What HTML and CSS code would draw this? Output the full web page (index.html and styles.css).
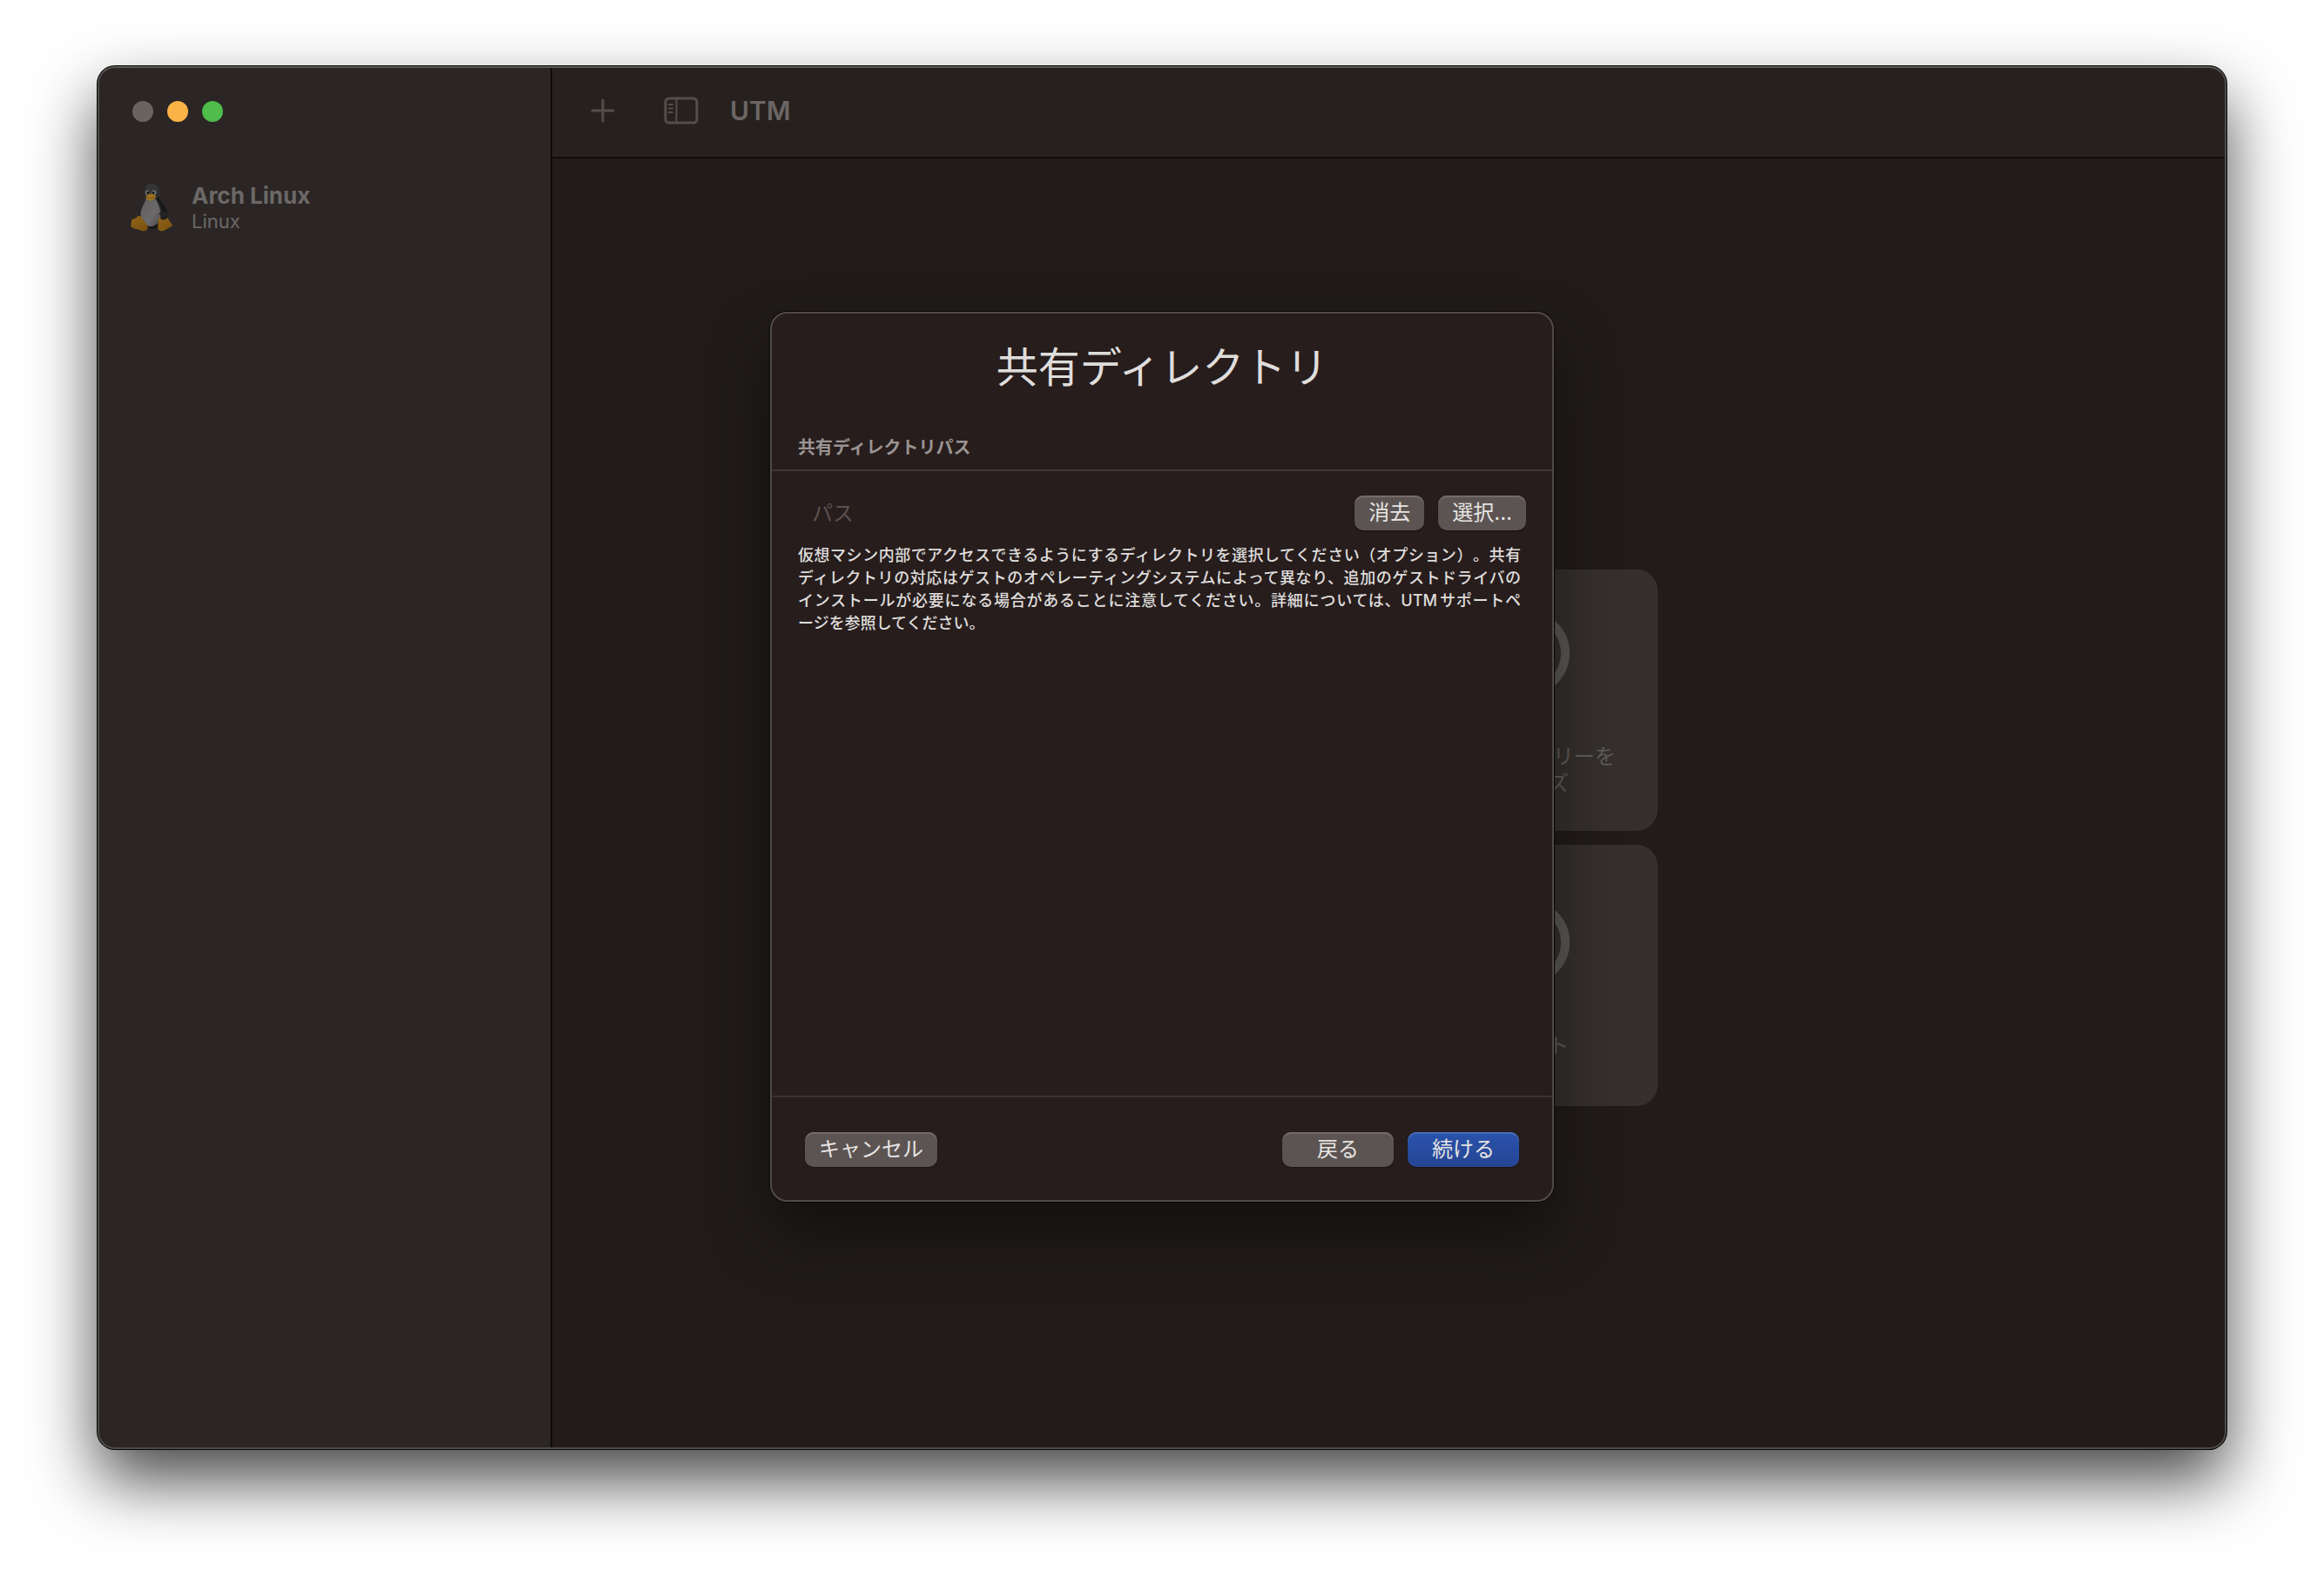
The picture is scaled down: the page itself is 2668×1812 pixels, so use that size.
FILE: index.html
```html
<!DOCTYPE html>
<html lang="ja">
<head>
<meta charset="utf-8">
<meta name="viewport" content="width=device-width, initial-scale=1">
<title>UTM</title>
<link rel="stylesheet" href="styles.css">
</head>
<body>
<div class="window">
  <aside class="sidebar">
    <div class="traffic">
      <button class="light light-close" type="button" aria-label="閉じる"></button>
      <button class="light light-min" type="button" aria-label="しまう"></button>
      <button class="light light-zoom" type="button" aria-label="拡大"></button>
    </div>
    <button class="machine" type="button">
      <svg class="tux" viewBox="28 30 146 168" aria-hidden="true">
        <defs>
          <linearGradient id="belly" x1="0" y1="0" x2="1" y2="1">
            <stop offset="0" stop-color="#5f5d5d"/><stop offset=".6" stop-color="#6b6969"/><stop offset="1" stop-color="#4b4949"/>
          </linearGradient>
          <linearGradient id="head" x1="0" y1="0" x2="0" y2="1">
            <stop offset="0" stop-color="#383737"/><stop offset="1" stop-color="#161515"/>
          </linearGradient>
          <linearGradient id="foot" x1="0" y1="0" x2="1" y2="1">
            <stop offset="0" stop-color="#8f6418"/><stop offset="1" stop-color="#78500f"/>
          </linearGradient>
        </defs>
        <path fill="url(#head)" d="M101 31C86 31 78 41 78 56C79 70 80 81 73 93C65 108 57 122 56 139C55 160 67 184 90 188C112 193 139 184 151 163C161 143 156 119 141 102C128 87 127 77 127 59C127 42 116 31 101 31Z"/>
        <path fill="url(#belly)" d="M82 82C79 98 66 113 63 132C60 156 73 180 96 181C118 181 131 164 133 144C135 124 126 107 118 91C113 81 91 79 82 82Z"/>
        <path fill="#191818" d="M118 82C127 101 141 116 139 145L151 158C162 133 150 109 137 97C130 90 126 83 125 76Z"/>
        <ellipse cx="86" cy="63" rx="7" ry="9" fill="#777575"/>
        <ellipse cx="109" cy="63" rx="8" ry="9" fill="#777575"/>
        <ellipse cx="88" cy="64" rx="4" ry="6" fill="#141313"/>
        <ellipse cx="107" cy="64" rx="4" ry="6" fill="#141313"/>
        <path fill="#9c711e" d="M80 77C87 70 94 66 99 67C106 67 112 73 118 76C114 84 105 91 96 91C88 90 82 84 80 77Z"/>
        <path fill="none" stroke="#694712" stroke-width="2" d="M82 78C91 84 105 84 116 77"/>
        <path fill="#242323" d="M125 139C132 137 138 151 145 151C154 151 156 143 155 139C151 126 139 127 131 132Z"/>
        <path fill="url(#foot)" d="M52 145C61 140 68 151 74 161C80 170 89 178 88 186C85 197 74 199 64 195C53 190 41 190 31 184C27 177 32 168 31 159C33 153 46 157 52 145Z"/>
        <path fill="url(#foot)" d="M125 151C128 147 132 156 140 158C149 159 152 150 158 152C163 158 164 166 172 172C177 178 168 183 159 187C148 194 139 200 128 195C118 189 126 170 125 151Z"/>
      </svg>
      <span class="machine-text">
        <span class="machine-name">Arch Linux</span>
        <span class="machine-os">Linux</span>
      </span>
    </button>
  </aside>

  <div class="main">
    <header class="toolbar">
      <button class="tool" type="button" aria-label="追加">
        <svg width="28" height="28" viewBox="0 0 28 28" aria-hidden="true"><path d="M14 2V26M2 14H26" fill="none" stroke="#544e4b" stroke-width="3" stroke-linecap="round"/></svg>
      </button>
      <button class="tool" type="button" aria-label="サイドバー">
        <svg width="40" height="32" viewBox="0 0 40 32" aria-hidden="true"><g fill="none" stroke="#544e4b" stroke-width="2"><rect x="2" y="2" width="36" height="28" rx="4" stroke-width="3"/><path d="M14.500 2V30"/><path d="M6 9H10M6 13.500H10M6 18H10" stroke-linecap="round"/></g></svg>
      </button>
      <h1 class="app-title">UTM</h1>
    </header>
    <main class="welcome">
      <div class="cards">
        <button class="card" type="button">
          <svg class="ring" viewBox="0 0 98 98" aria-hidden="true"><circle cx="49" cy="49" r="44" fill="none" stroke="#5b5856" stroke-width="10"/></svg>
          <span><span class="card-latin">UTM</span>ギャラリーを<br>ブラウズ</span>
        </button>
        <button class="card" type="button">
          <svg class="ring" viewBox="0 0 98 98" aria-hidden="true"><circle cx="49" cy="49" r="44" fill="none" stroke="#5b5856" stroke-width="10"/></svg>
          <span>サポート</span>
        </button>
      </div>
    </main>
  </div>

  <div class="overlay">
    <form class="dialog" role="dialog" aria-labelledby="dialog-title">
      <h2 class="dialog-title" id="dialog-title">共有ディレクトリ</h2>
      <label class="section-label" for="path">共有ディレクトリパス</label>
      <div class="dialog-body">
        <div class="path-row">
          <input class="path-input" id="path" type="text" placeholder="パス">
          <button class="btn" type="button">消去</button>
          <button class="btn" type="button">選択...</button>
        </div>
        <p class="hint">
          <span class="hint-line">仮想マシン内部でアクセスできるようにするディレクトリを選択してください（オプション）。共有</span>
          <span class="hint-line">ディレクトリの対応はゲストのオペレーティングシステムによって異なり、追加のゲストドライバの</span>
          <span class="hint-line">インストールが必要になる場合があることに注意してください。詳細については、UTMサポートペ</span>
          <span class="hint-line">ージを参照してください。</span>
        </p>
      </div>
      <footer class="dialog-footer">
        <button class="btn" type="button">キャンセル</button>
        <span class="spacer"></span>
        <button class="btn btn-wide" type="button">戻る</button>
        <button class="btn btn-wide btn-primary" type="submit">続ける</button>
      </footer>
    </form>
  </div>
</div>
</body>
</html>
```
FILE: styles.css
```css
*,
*::before,
*::after {
  box-sizing: border-box;
}

body {
  margin: 0;
  padding: 76px 112px 148px;
  min-height: 100vh;
  display: flex;
  background: #fff;
  font-family: Inter, "Noto Sans CJK JP", sans-serif;
  font-size: 24px;
}

button,
input {
  font: inherit;
  color: inherit;
  border: 0;
  margin: 0;
  padding: 0;
  background: none;
}

.window {
  position: relative;
  flex: 1;
  display: flex;
  border-radius: 20px;
  overflow: hidden;
  background: #211c19;
  box-shadow: 0 0 0 1px #050505, 0 36px 76px rgba(0, 0, 0, 0.72);
}

/* light rim drawn over the panes */
.window::after {
  content: "";
  position: absolute;
  inset: 0;
  border-radius: 20px;
  border: 2px solid #4d4a48;
  border-top-color: #5c5a53;
  pointer-events: none;
}

.sidebar {
  flex: 0 0 522px;
  padding: 40px 20px 0 38px;
  background: #2b2625;
  border-right: 2px solid #0f0c0b;
}

.traffic {
  display: flex;
  gap: 16px;
  padding-left: 2px;
}

.light {
  width: 24px;
  height: 24px;
  border-radius: 50%;
}

.light-close { background: #6a6461; }
.light-min { background: #fab446; }
.light-zoom { background: #4fbc4b; }

.machine {
  display: flex;
  align-items: center;
  gap: 22px;
  margin-top: 69px;
  color: #6b6866;
  text-align: left;
}

.tux {
  width: 48px;
  height: 56px;
}

.machine-text {
  display: flex;
  flex-direction: column;
}

.machine-name {
  font-size: 26px;
  line-height: 32px;
  font-weight: 700;
}

.machine-os {
  font-size: 22px;
  line-height: 26px;
}

.main {
  flex: 1;
  display: flex;
  flex-direction: column;
}

.toolbar {
  display: flex;
  align-items: center;
  height: 106px;
  padding: 0 44px 2px;
  gap: 36px;
  background: #26211e;
  border-bottom: 2px solid #120e0d;
}

.tool {
  display: flex;
}

.tool + .tool {
  margin-left: 20px;
}

.app-title {
  margin: 0;
  font-size: 30px;
  line-height: 36px;
  font-weight: 600;
  color: #6b6664;
}

.welcome {
  flex: 1;
  display: flex;
  align-items: center;
  justify-content: center;
  padding-top: 78px;
}

.cards {
  display: grid;
  grid-template-columns: 300px 300px;
  grid-auto-rows: 300px;
  gap: 16px;
}

.card {
  grid-column: 2;
  display: flex;
  flex-direction: column;
  align-items: center;
  justify-content: center;
  gap: 54px;
  padding-top: 8px;
  border-radius: 24px;
  background: #35302d;
  color: #5f5c5a;
  line-height: 31px;
}

.card-latin {
  font-size: 26px;
  line-height: 1;
}

.ring {
  width: 98px;
  height: 98px;
}

.overlay {
  position: absolute;
  inset: 0;
  display: flex;
  align-items: center;
  justify-content: center;
  padding-bottom: 2px;
}

.dialog {
  position: relative;
  display: flex;
  flex-direction: column;
  width: 900px;
  max-width: 100%;
  min-height: 1022px;
  border-radius: 20px;
  background: #271d1c;
  color: #dfdddc;
  box-shadow: 0 0 0 1px #080606, 0 36px 76px rgba(0, 0, 0, 0.45);
}

.dialog::after {
  content: "";
  position: absolute;
  inset: 0;
  border-radius: 20px;
  border: 2px solid #524a49;
  pointer-events: none;
}

.dialog-title {
  margin: 32px 0 46px;
  text-align: center;
  font-size: 48px;
  line-height: 64px;
  font-weight: 400;
}

.section-label {
  padding: 0 32px 11px;
  font-size: 20px;
  line-height: 28px;
  font-weight: 700;
  color: #9a9493;
  border-bottom: 2px solid #3e3534;
}

.dialog-body {
  flex: 1;
  padding: 28px 32px;
}

.path-row {
  display: flex;
  gap: 16px;
}

.path-input {
  flex: 1;
  min-width: 0;
  padding: 0 16px;
  outline: none;
}

.path-input::placeholder {
  color: #5c5251;
  opacity: 1;
}

.hint {
  margin: 16px 6px 0 0;
  font-size: 18px;
  line-height: 26px;
  font-weight: 500;
  text-autospace: normal;
  text-spacing-trim: space-all;
}

.hint-line {
  display: block;
  text-align-last: justify;
}

.hint-line:last-child {
  text-align-last: start;
}

.btn {
  height: 40px;
  padding: 0 16px;
  line-height: 38px;
  border-radius: 10px;
  background: #5c5452;
  color: #e6e4e3;
  white-space: nowrap;
  box-shadow: inset 0 2px 0 #746c6a, 0 1px 2px rgba(0, 0, 0, 0.4);
}

.btn-wide {
  min-width: 128px;
}

.btn-primary {
  background: linear-gradient(#2a53ac, #254593);
  box-shadow: inset 0 2px 0 #4a6dba, 0 1px 2px rgba(0, 0, 0, 0.4);
}

.dialog-footer {
  display: flex;
  gap: 16px;
  padding: 40px;
  border-top: 2px solid #3a3130;
}

.spacer {
  flex: 1;
}
```
